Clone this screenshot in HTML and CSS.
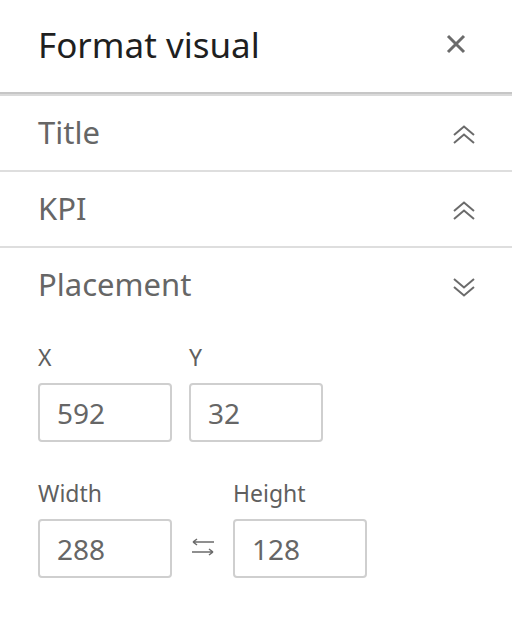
FILE: index.html
```html
<!DOCTYPE html>
<html>
<head>
<meta charset="utf-8">
<link rel="stylesheet" href="styles.css">
</head>
<body>
<div class="panel">
  <header class="panel-header">
    <h1 class="panel-title">Format visual</h1>
    <button class="close-btn" aria-label="Close">
      <svg width="20" height="20" viewBox="0 0 20 20"><path d="M2 2 L18 18 M18 2 L2 18" stroke="#6b6b6b" stroke-width="3" fill="none"/></svg>
    </button>
  </header>
  <section class="section">
    <div class="section-head">
      <span class="section-title">Title</span>
      <svg class="chev" width="24" height="20" viewBox="0 0 24 20"><path d="M2 10 L12 1.5 L22 10 M2 18 L12 9.5 L22 18" stroke="#6b6b6b" stroke-width="2" fill="none"/></svg>
    </div>
  </section>
  <section class="section">
    <div class="section-head">
      <span class="section-title">KPI</span>
      <svg class="chev" width="24" height="20" viewBox="0 0 24 20"><path d="M2 10 L12 1.5 L22 10 M2 18 L12 9.5 L22 18" stroke="#6b6b6b" stroke-width="2" fill="none"/></svg>
    </div>
  </section>
  <section class="section open">
    <div class="section-head">
      <span class="section-title">Placement</span>
      <svg class="chev" width="24" height="20" viewBox="0 0 24 20"><path d="M2 2 L12 10.5 L22 2 M2 10 L12 18.5 L22 10" stroke="#6b6b6b" stroke-width="2" fill="none"/></svg>
    </div>
    <div class="fields">
      <div class="field-row">
        <label class="field">
          <span class="field-label">X</span>
          <span class="input">592</span>
        </label>
        <label class="field">
          <span class="field-label">Y</span>
          <span class="input">32</span>
        </label>
      </div>
      <div class="field-row size-row">
        <label class="field">
          <span class="field-label">Width</span>
          <span class="input">288</span>
        </label>
        <svg class="swap" width="26" height="18" viewBox="0 0 26 18"><path d="M3 4 H24 M3 4 L7 1 M3 4 L7 7 M2 14 H23 M23 14 L19 11 M23 14 L19 17" stroke="#6b6b6b" stroke-width="1.5" fill="none"/></svg>
        <label class="field">
          <span class="field-label">Height</span>
          <span class="input">128</span>
        </label>
      </div>
    </div>
  </section>
</div>
</body>
</html>
```
FILE: styles.css
```css
* { box-sizing: border-box; }
html, body { margin: 0; padding: 0; background: #fff; }
body {
  font-family: "Noto Sans", "Open Sans", sans-serif;
  width: 512px;
  height: 630px;
  overflow: hidden;
}
.panel-header {
  height: 96px;
  display: flex;
  align-items: center;
  justify-content: space-between;
  padding: 0 46px 6px 38px;
  border-bottom: 2px solid #dadada;
  box-shadow: inset 0 -4px 0 -2px #c6c6c6;
}
.panel-title {
  margin: 0;
  font-size: 35px;
  font-weight: 400;
  color: #1f1f1f;
  letter-spacing: 0;
}
.close-btn {
  border: 0;
  background: none;
  padding: 0;
  width: 20px;
  height: 20px;
  display: flex;
}
.section {
  border-bottom: 2px solid #dedede;
}
.section.open { border-bottom: 0; }
.section-head {
  height: 74px;
  display: flex;
  align-items: center;
  justify-content: space-between;
  padding: 0 36px 2px 38px;
}
.section-title {
  font-size: 31px;
  color: #666;
}
.chev { display: block; margin-top: 6px; }
.fields {
  padding: 20px 38px 0 38px;
  display: flex;
  flex-direction: column;
  gap: 36px;
}
.field-row {
  display: flex;
  align-items: flex-end;
  gap: 17px;
}
.size-row { gap: 0; }
.size-row .swap { margin: 0 17px 22px 18px; }
.field {
  display: flex;
  flex-direction: column;
  gap: 11px;
}
.field-label {
  font-size: 23px;
  color: #5f5f5f;
  line-height: 30px;
}
.input {
  width: 134px;
  height: 59px;
  border: 2px solid #cfcfcf;
  border-radius: 4px;
  display: flex;
  align-items: center;
  padding-left: 17px;
  font-size: 28px;
  color: #666;
}
```
